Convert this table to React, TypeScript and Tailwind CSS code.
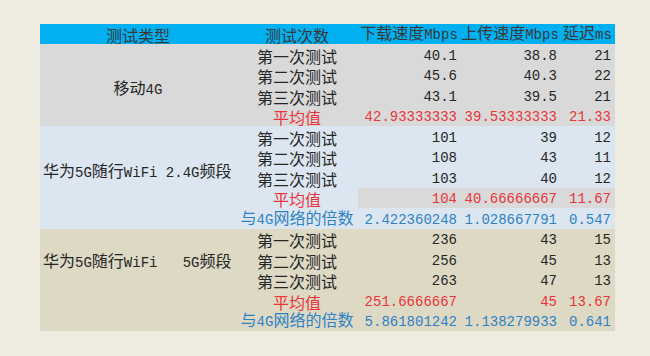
import React from "react";

type Row = { name: string; vals: string[]; kind?: "avg" | "ratio" };

type Section = {
	label: string;
	bg: string;
	span: string;
	labelPos: string;
	rows: Row[];
};

const sections: Section[] = [
	{
		label: "移动4G",
		bg: "bg-[#d9d9d9]",
		span: "row-span-4",
		labelPos: "justify-center pt-[33px]",
		rows: [
			{ name: "第一次测试", vals: ["40.1", "38.8", "21"] },
			{ name: "第二次测试", vals: ["45.6", "40.3", "22"] },
			{ name: "第三次测试", vals: ["43.1", "39.5", "21"] },
			{ name: "平均值", vals: ["42.93333333", "39.53333333", "21.33"], kind: "avg" },
		],
	},
	{
		label: "华为5G随行WiFi 2.4G频段",
		bg: "bg-[#dce6f1]",
		span: "row-span-5",
		labelPos: "justify-start pl-[3px] pt-[34px]",
		rows: [
			{ name: "第一次测试", vals: ["101", "39", "12"] },
			{ name: "第二次测试", vals: ["108", "43", "11"] },
			{ name: "第三次测试", vals: ["103", "40", "12"] },
			{ name: "平均值", vals: ["104", "40.66666667", "11.67"], kind: "avg" },
			{ name: "与4G网络的倍数", vals: ["2.422360248", "1.028667791", "0.547"], kind: "ratio" },
		],
	},
	{
		label: "华为5G随行WiFi   5G频段",
		bg: "bg-[#ddd9c4]",
		span: "row-span-5",
		labelPos: "justify-start pl-[3px] pt-[21px]",
		rows: [
			{ name: "第一次测试", vals: ["236", "43", "15"] },
			{ name: "第二次测试", vals: ["256", "45", "13"] },
			{ name: "第三次测试", vals: ["263", "47", "13"] },
			{ name: "平均值", vals: ["251.6666667", "45", "13.67"], kind: "avg" },
			{ name: "与4G网络的倍数", vals: ["5.861801242", "1.138279933", "0.641"], kind: "ratio" },
		],
	},
];

// ascii runs are drawn half width, like the sheet's font
function Mixed({ text }: { text: string }) {
	const parts = text.split(/([\x20-\x7e]+)/).filter(Boolean);
	return (
		<span className="whitespace-pre">
			{parts.map((p, i) =>
				/^[\x20-\x7e]+$/.test(p) ? (
					<span key={i} className="font-['Liberation_Mono',monospace] text-[14px]">
						{p}
					</span>
				) : (
					<span key={i}>{p}</span>
				)
			)}
		</span>
	);
}

const tone = (kind?: string) =>
	kind === "avg" ? "text-[#e8353a]" : kind === "ratio" ? "text-[#2e82c4]" : "text-[#262626]";

export default function App() {
	return (
		<div className="w-[650px] h-[356px] bg-[#eeece1] pt-[24px] pl-[40px] font-['Noto_Sans_CJK_SC',sans-serif] text-[16px]">
			<div className="grid grid-cols-[196px_122px_102px_100px_55px] grid-rows-[20px_repeat(14,20.5px)] w-[575px]">
				{/* header */}
				{["测试类型", "测试次数", "下载速度Mbps", "上传速度Mbps", "延迟ms"].map((h) => (
					<div
						key={h}
						className="bg-[#00b0f0] text-[#383838] flex items-end justify-center leading-[18px] whitespace-nowrap"
					>
						<Mixed text={h} />
					</div>
				))}

				{sections.map((s) => (
					<React.Fragment key={s.label}>
						<div className={`${s.span} ${s.bg} flex items-start ${s.labelPos} text-[#262626] leading-[20px]`}>
							<Mixed text={s.label} />
						</div>
						{s.rows.map((r, ri) => {
							const grayVals = s.label.includes("2.4G") && r.kind === "avg";
							return (
								<React.Fragment key={ri}>
									<div
										className={`${s.bg} ${tone(r.kind)} flex items-end justify-center leading-[18px] whitespace-nowrap`}
									>
										<Mixed text={r.name} />
									</div>
									{r.vals.map((v, vi) => (
										<div
											key={vi}
											className={`${grayVals ? "bg-[#d9d9d9]" : s.bg} ${tone(r.kind)} flex items-end justify-end ${vi === 2 ? "pr-[4px]" : "pr-[3px]"} leading-[18px] font-['Liberation_Mono',monospace] text-[14px]`}
										>
											{v}
										</div>
									))}
								</React.Fragment>
							);
						})}
					</React.Fragment>
				))}
			</div>
		</div>
	);
}
